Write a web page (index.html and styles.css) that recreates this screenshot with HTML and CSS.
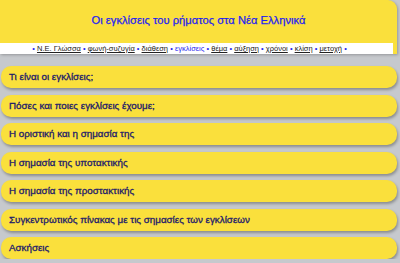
FILE: index.html
```html
<!DOCTYPE html>
<html lang="el">
<head>
    <meta charset="UTF-8" />
    <meta name="viewport" content="width=device-width, initial-scale=1.0" />
    <title>Οι εγκλίσεις του ρήματος</title>
    <link rel="stylesheet" href="styles.css">
</head>
<body>
    <header class="top">
        <h1 class="title">Οι εγκλίσεις του ρήματος στα Νέα Ελληνικά</h1>
        <nav class="nav">
            <span class="dot">•</span> <a href="#">Ν.Ε. Γλώσσα</a>
            <span class="dot">•</span> <a href="#">φωνή-συζυγία</a>
            <span class="dot">•</span> <a href="#">διάθεση</a>
            <span class="dot">•</span> <span class="current">εγκλίσεις</span>
            <span class="dot">•</span> <a href="#">θέμα</a>
            <span class="dot">•</span> <a href="#">αύξηση</a>
            <span class="dot">•</span> <a href="#">χρόνοι</a>
            <span class="dot">•</span> <a href="#">κλίση</a>
            <span class="dot">•</span> <a href="#">μετοχή</a>
            <span class="dot">•</span>
        </nav>
    </header>

    <main class="list">
        <div class="item">Τι είναι οι εγκλίσεις;</div>
        <div class="item">Πόσες και ποιες εγκλίσεις έχουμε;</div>
        <div class="item">Η οριστική και η σημασία της</div>
        <div class="item">Η σημασία της υποτακτικής</div>
        <div class="item">Η σημασία της προστακτικής</div>
        <div class="item">Συγκεντρωτικός πίνακας με τις σημασίες των εγκλίσεων</div>
        <div class="item">Ασκήσεις</div>
    </main>
</body>
</html>
```

FILE: styles.css
```css
body { margin: 0; background-color: #c6c9cd; font-family: "Liberation Sans", Arial, sans-serif; overflow: hidden; }
.top { width: 397px; background-color: #fae03c; border-top-right-radius: 9px; box-shadow: 1px 1px 3px rgba(0, 0, 0, 0.25); }
.title { margin: 0; height: 43px; line-height: 41px; text-align: center; font-size: 11.2px; font-weight: normal; color: #1f1ff0; -webkit-text-stroke: 0.25px #1f1ff0; }
.nav { width: 379px; height: 11px; padding-right: 14px; background-color: #fff; text-align: center; font-size: 7.5px; line-height: 11px; color: #222; white-space: nowrap; }
.nav a { color: #222; text-decoration: underline; }
.nav .dot { color: #1f1ff0; }
.nav .current { color: #1f1ff0; }
.list { display: flex; flex-direction: column; gap: 6.5px; padding: 12px 3px 0 1px; }
.item { height: 22px; line-height: 22px; padding-left: 8px; background-color: #fae03c; border-radius: 10px; box-shadow: 1px 2px 3px rgba(0, 0, 0, 0.3); font-size: 9.8px; color: #1c1a6b; -webkit-text-stroke: 0.3px #1c1a6b; }
```
